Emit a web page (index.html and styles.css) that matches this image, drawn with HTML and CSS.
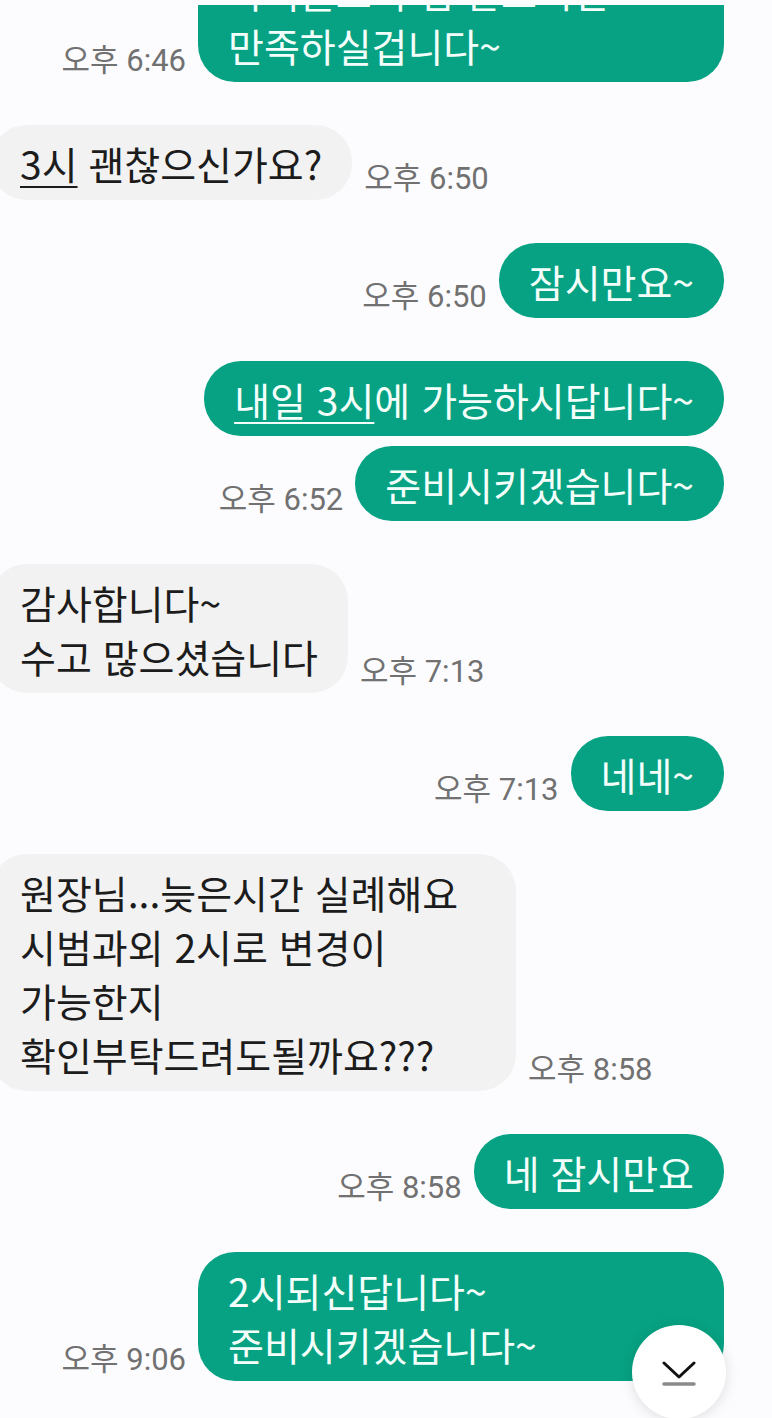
FILE: index.html
```html
<!DOCTYPE html>
<html lang="ko">
<head>
    <meta charset="UTF-8">
    <meta name="viewport" content="width=device-width, initial-scale=1.0">
    <title>메시지</title>
    <link rel="stylesheet" href="styles.css">
</head>
<body>

<!-- Message list -->
<main class="chat">

    <div class="group sent first">
        <div class="row">
            <span class="time">오후 6:46</span>
            <div class="bubble wide">아이들도 수업 받으시면<br>만족하실겁니다~</div>
        </div>
    </div>

    <div class="group received">
        <div class="row">
            <div class="bubble"><u>3시</u> 괜찮으신가요?</div>
            <span class="time">오후 6:50</span>
        </div>
    </div>

    <div class="group sent">
        <div class="row">
            <span class="time">오후 6:50</span>
            <div class="bubble">잠시만요~</div>
        </div>
    </div>

    <div class="group sent">
        <div class="row">
            <div class="bubble"><u>내일 3시</u>에 가능하시답니다~</div>
        </div>
        <div class="row">
            <span class="time">오후 6:52</span>
            <div class="bubble">준비시키겠습니다~</div>
        </div>
    </div>

    <div class="group received">
        <div class="row">
            <div class="bubble">감사합니다~<br>수고 많으셨습니다</div>
            <span class="time">오후 7:13</span>
        </div>
    </div>

    <div class="group sent">
        <div class="row">
            <span class="time">오후 7:13</span>
            <div class="bubble">네네~</div>
        </div>
    </div>

    <div class="group received">
        <div class="row">
            <div class="bubble wide">원장님...늦은시간 실례해요<br>시범과외 2시로 변경이<br>가능한지<br>확인부탁드려도될까요???</div>
            <span class="time">오후 8:58</span>
        </div>
    </div>

    <div class="group sent">
        <div class="row">
            <span class="time">오후 8:58</span>
            <div class="bubble">네 잠시만요</div>
        </div>
    </div>

    <div class="group sent">
        <div class="row">
            <span class="time">오후 9:06</span>
            <div class="bubble wide">2시되신답니다~<br>준비시키겠습니다~</div>
        </div>
    </div>

</main>

<!-- Scroll to bottom -->
<button class="scroll-btn" aria-label="맨 아래로">
    <svg width="34" height="26" viewBox="0 0 34 26">
        <path d="M2 2 L17 16 L32 2" fill="none" stroke="#111" stroke-width="3" stroke-linecap="round" stroke-linejoin="round"/>
        <line x1="2" y1="23" x2="32" y2="23" stroke="#8a8a8a" stroke-width="3.5" stroke-linecap="round"/>
    </svg>
</button>

</body>
</html>
```

FILE: styles.css
```css
body {
    margin: 0;
    padding-top: 5px;
    height: 100vh;
    box-sizing: border-box;
    overflow: hidden;
    background-color: #fcfcfe;
    font-family: "Noto Sans CJK KR", "Noto Sans", sans-serif;
    position: relative;
}
.chat {
    display: flex;
    flex-direction: column;
    gap: 43px;
    overflow: hidden;
    height: 100%;
}
.group {
    display: flex;
    flex-direction: column;
    gap: 10px;
}
.group.first {
    margin-top: -52px;
}
.sent {
    align-items: flex-end;
    padding-right: 48px;
}
.received {
    align-items: flex-start;
    margin-left: -10px;
}
.row {
    display: flex;
    align-items: flex-end;
    gap: 12px;
}
.bubble {
    font-size: 39px;
    line-height: 54px;
    padding: 11px 30px 10px 30px;
    border-radius: 37px;
    white-space: nowrap;
}
.bubble.wide {
    width: 466px;
}
.sent .bubble {
    background-color: #07a283;
    color: #f3fffb;
}
.received .bubble {
    background-color: #f2f2f2;
    color: #1c1c1c;
}
.bubble u {
    text-underline-offset: 6px;
    text-decoration-thickness: 2px;
}
.time {
    font-family: Roboto, "Noto Sans CJK KR", sans-serif;
    font-size: 31px;
    line-height: 32px;
    color: #717171;
    margin-bottom: 5px;
    white-space: nowrap;
}
.scroll-btn {
    position: absolute;
    left: 632px;
    top: 1325px;
    width: 94px;
    height: 94px;
    border-radius: 50%;
    border: none;
    background-color: #fff;
    box-shadow: 0 2px 14px rgba(0, 0, 0, 0.12);
    display: flex;
    align-items: center;
    justify-content: center;
    padding: 0;
    padding-top: 4px;
    cursor: pointer;
}
```
